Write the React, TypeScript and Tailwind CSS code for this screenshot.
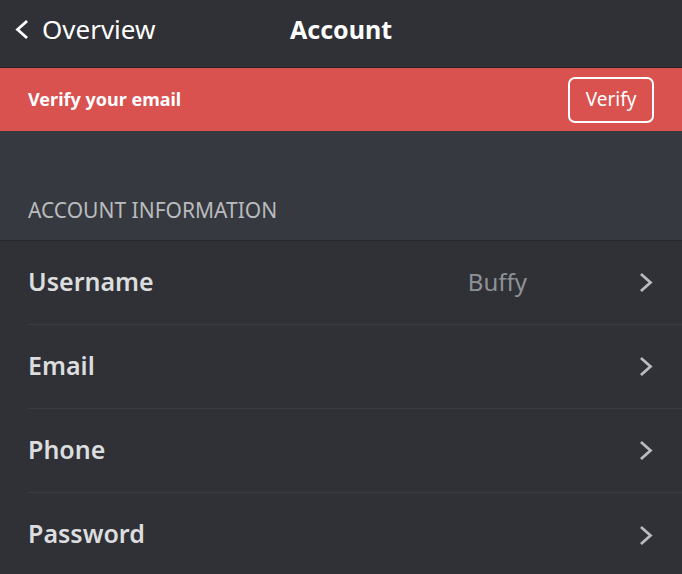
// ─── Filas de la sección de cuenta ───────────────────────────────────────────

const ROWS: { label: string; value?: string }[] = [
  { label: 'Username', value: 'Buffy' },
  { label: 'Email' },
  { label: 'Phone' },
  { label: 'Password' },
];

function Chevron({ dir, className }: { dir: 'left' | 'right'; className?: string }) {
  const points = dir === 'left' ? '11,2 2.5,9.5 11,17' : '2,2 10.5,9.5 2,17';
  return (
    <svg width="13" height="19" viewBox="0 0 13 19" fill="none" className={className}>
      <polyline points={points} stroke="currentColor" strokeWidth="2.8" strokeLinecap="square" />
    </svg>
  );
}

export default function App() {
  return (
    <main
      className="h-[574px] w-[682px] overflow-hidden bg-[#36393f] text-white"
      style={{ fontFamily: '"Noto Sans", "Open Sans", sans-serif' }}
    >
      {/* Cabecera */}
      <header className="relative flex h-[68px] items-center border-b border-[#232428] bg-[#2f3136] pl-[15px]">
        <button type="button" className="flex items-center gap-[14px] text-[26px] leading-none text-white">
          <Chevron dir="left" className="-mt-[8px]" />
          <span className="-mt-[10px]">Overview</span>
        </button>
        <h1 className="absolute left-[290px] top-[11px] text-[25px] font-bold">Account</h1>
      </header>

      {/* Aviso de verificación */}
      <div className="flex h-[63px] items-center justify-between bg-[#d9524f] pl-[28px] pr-[28px]">
        <span className="text-[18px] font-bold">Verify your email</span>
        <button
          type="button"
          className="flex h-[46px] w-[86px] items-center justify-center rounded-[7px] border-2 border-white text-[19px]"
        >
          Verify
        </button>
      </div>

      {/* Sección */}
      <div className="flex h-[109px] items-end px-[28px] pb-[14px]">
        <h2 className="text-[21px] uppercase text-[#b9bbbe]">Account Information</h2>
      </div>

      <ul className="border-y border-[#26282c] border-b-[#4a4d52] bg-[#2f3136]">
        {ROWS.map((row, i) => (
          <li key={row.label} className="pl-[28px]">
            <div
              className={`flex h-[84px] items-center pr-[29px] ${
                i < ROWS.length - 1 ? 'border-b border-[#3a3c41]' : ''
              }`}
            >
              <span className="-mt-[2px] flex-1 text-[25px] font-semibold text-[#dcddde]">{row.label}</span>
              {row.value && <span className="-mt-[2px] mr-[113px] text-[24px] text-[#8e9297]">{row.value}</span>}
              <Chevron dir="right" className="text-[#b9bbbe]" />
            </div>
          </li>
        ))}
      </ul>
    </main>
  );
}
